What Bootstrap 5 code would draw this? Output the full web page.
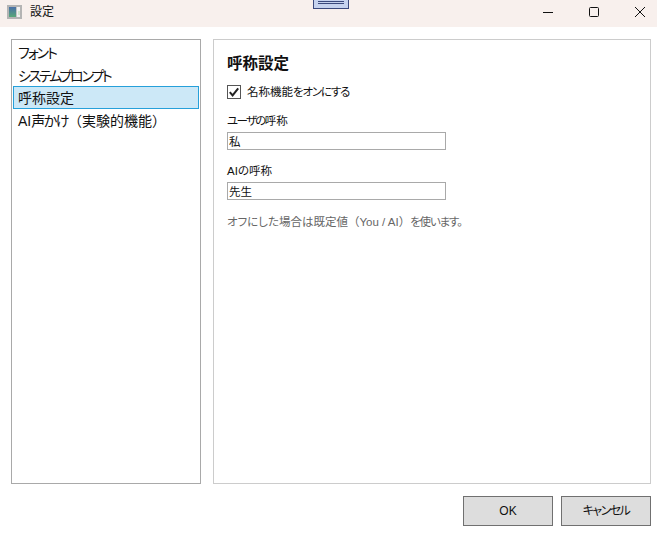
<!DOCTYPE html>
<html lang="ja">
<head>
<meta charset="utf-8">
<title>設定</title>
<link rel="stylesheet" href="https://cdn.jsdelivr.net/npm/bootstrap@5.3.0/dist/css/bootstrap.min.css">
<style>
html,body{height:533px;overflow:hidden;background:#fff;}
body{font-family:"Liberation Sans","Noto Sans CJK JP",sans-serif;color:#111;font-feature-settings:"palt";}
.win-bar{height:27px;background:#f8f0ed;position:relative;}
.win-title{font-size:12px;margin-left:7px;gap:8px;padding-bottom:4px;}
.win-ctl{width:46px;height:27px;padding-bottom:4px;}
.win-ctls{margin-right:-6px;}
.tab-peek{position:absolute;left:313px;top:0;width:36px;height:9px;background:#c6d3ef;border:1px solid #3b4a7d;border-top:0;}
.tab-peek::before{content:"";display:block;margin:1px 4px 0;height:3px;border-top:1px solid #3b4a7d;border-bottom:1px solid #3b4a7d;}
.win-main{height:457px;padding:12px 6px 0 11px;gap:12px;}
.side-pane{width:190px;border:1px solid #a9a9a9;padding:1px;font-size:14px;line-height:22.5px;border-radius:0;}
.side-item{height:22.5px;padding-left:4px;border:1px solid transparent;background:transparent;color:#111;white-space:nowrap;}
.side-item.active{background:#cce8f7;border-color:#26a0da;color:#111;height:23px;line-height:22px;}
.kana-a{letter-spacing:-2px;}
.kana-b{letter-spacing:-2.2px;}
.kana-c{letter-spacing:-1.2px;}
.kana-e{letter-spacing:-1.7px;}
.kana-f{letter-spacing:-1.5px;}
.full-w{font-feature-settings:normal;}
.form-pane{flex:1;border:1px solid #ccc;padding:13px;}
.pane-title{font-size:15.500px;font-weight:600;line-height:20px;margin:1px 0 10px;}
.chk-box{width:14px;height:14px;border:1px solid #555;background:#fff;}
.chk-row{font-size:11.500px;line-height:16px;gap:6px;margin-bottom:13px;}
.fld-label{font-size:11.500px;line-height:16px;margin:0 0 3px;display:block;}
.fld-input{display:block;width:219px;height:18px;border:1px solid #a9a9a9;border-radius:0;font-size:11.500px;line-height:16px;padding:0 1px;margin-bottom:13px;color:#111;font-family:inherit;font-feature-settings:"palt";}
.fld-hint{font-size:11.500px;color:#666;line-height:16px;margin-top:14px;}
.win-foot{padding:12px 6px 0 0;gap:8px;}
.foot-btn{width:90px;height:30px;background:#dddddd;border:1px solid #707070;border-radius:0;font-size:12px;padding:0;color:#111;font-feature-settings:"palt";}
</style>
</head>
<body>
<div class="win-bar d-flex align-items-center justify-content-between">
  <div class="win-title d-flex align-items-center">
    <svg width="15" height="14" viewBox="0 0 15 14"><defs><linearGradient id="ig" x1="0" y1="0" x2="0" y2="1"><stop offset="0" stop-color="#4a6fa8"/><stop offset="1" stop-color="#58a878"/></linearGradient></defs><rect x="1" y="1" width="13" height="12" fill="#f2f2f2" stroke="#b4b4b4" stroke-width="2"/><rect x="2" y="2" width="7" height="10" fill="url(#ig)"/><rect x="9" y="2" width="1" height="10" fill="#c4c4c4"/><rect x="11" y="6" width="2" height="4" fill="#d4e6d0"/></svg>
    <span>設定</span>
  </div>
  <div class="tab-peek"></div>
  <div class="win-ctls d-flex">
    <div class="win-ctl d-flex align-items-center justify-content-center"><svg width="12" height="12" viewBox="0 0 12 12"><path d="M1 6.500H11" stroke="#111" fill="none"/></svg></div>
    <div class="win-ctl d-flex align-items-center justify-content-center"><svg width="12" height="12" viewBox="0 0 12 12"><rect x="1.500" y="1.500" width="9" height="9" rx="1" fill="none" stroke="#111"/></svg></div>
    <div class="win-ctl d-flex align-items-center justify-content-center"><svg width="12" height="12" viewBox="0 0 12 12"><path d="M1 1L11 11M11 1L1 11" stroke="#111" fill="none"/></svg></div>
  </div>
</div>
<div class="win-main d-flex">
  <div class="side-pane list-group">
    <div class="side-item"><span class="kana-a">フォント</span></div>
    <div class="side-item"><span class="kana-b">システムプロンプト</span></div>
    <div class="side-item active">呼称設定</div>
    <div class="side-item">AI<span class="kana-f">声かけ</span><span class="full-w">（</span>実験的機能<span class="full-w">）</span></div>
  </div>
  <div class="form-pane">
    <h1 class="pane-title">呼称設定</h1>
    <div class="chk-row d-flex align-items-center">
      <span class="chk-box d-flex align-items-center justify-content-center"><svg width="12" height="12" viewBox="0 0 12 12"><path d="M1.800 6.200L4.600 9.400L10.200 2.400" fill="none" stroke="#222" stroke-width="2"/></svg></span>
      <span>名称機能<span class="kana-c">をオンにする</span></span>
    </div>
    <label class="fld-label" for="a"><span class="kana-e">ユーザの</span>呼称</label>
    <input class="fld-input" id="a" value="私">
    <label class="fld-label" for="b">AIの呼称</label>
    <input class="fld-input" id="b" value="先生">
    <div class="fld-hint">オフにした場合は既定値<span class="full-w">（</span>You / AI<span class="full-w">）</span><span class="kana-c">を使います。</span></div>
  </div>
</div>
<div class="win-foot d-flex justify-content-end">
  <button class="btn foot-btn">OK</button>
  <button class="btn foot-btn"><span class="kana-f">キャンセル</span></button>
</div>
</body>
</html>
